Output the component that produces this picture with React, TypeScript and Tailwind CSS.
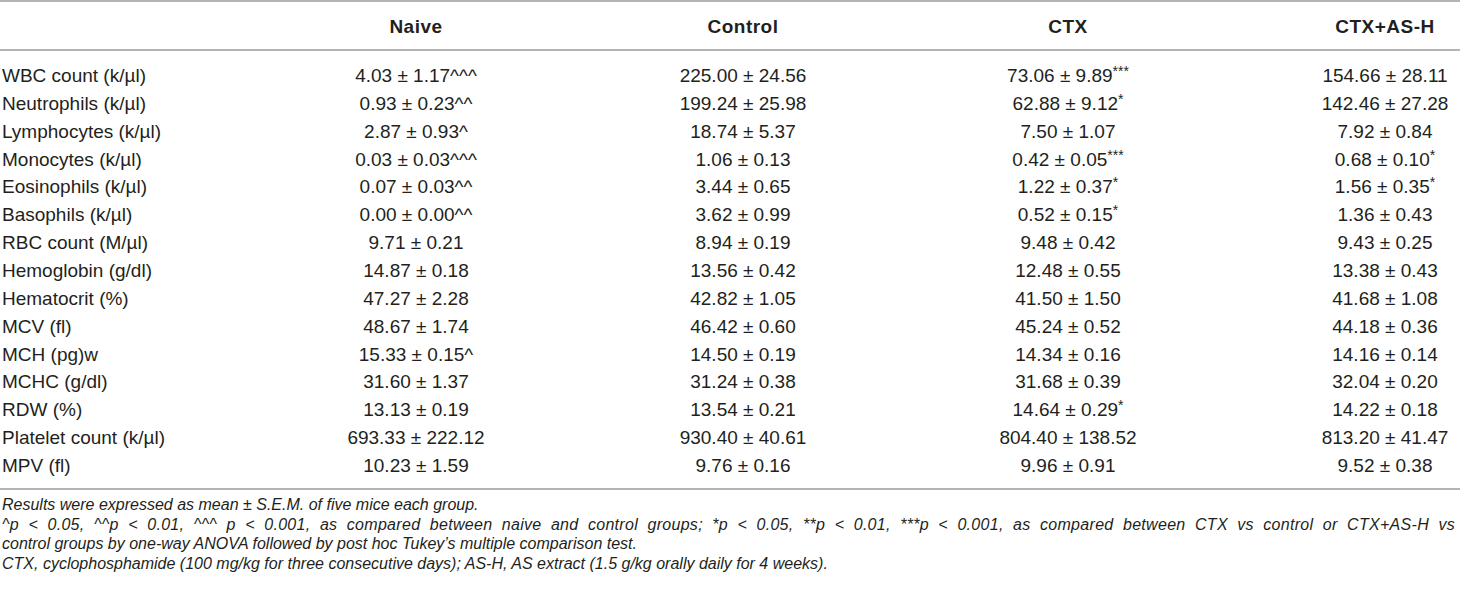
import React from "react";

const rows: [string, string, string, string, string][] = [
  ["WBC count (k/µl)", "4.03 ± 1.17^^^", "225.00 ± 24.56", "73.06 ± 9.89***", "154.66 ± 28.11"],
  ["Neutrophils (k/µl)", "0.93 ± 0.23^^", "199.24 ± 25.98", "62.88 ± 9.12*", "142.46 ± 27.28"],
  ["Lymphocytes (k/µl)", "2.87 ± 0.93^", "18.74 ± 5.37", "7.50 ± 1.07", "7.92 ± 0.84"],
  ["Monocytes (k/µl)", "0.03 ± 0.03^^^", "1.06 ± 0.13", "0.42 ± 0.05***", "0.68 ± 0.10*"],
  ["Eosinophils (k/µl)", "0.07 ± 0.03^^", "3.44 ± 0.65", "1.22 ± 0.37*", "1.56 ± 0.35*"],
  ["Basophils (k/µl)", "0.00 ± 0.00^^", "3.62 ± 0.99", "0.52 ± 0.15*", "1.36 ± 0.43"],
  ["RBC count (M/µl)", "9.71 ± 0.21", "8.94 ± 0.19", "9.48 ± 0.42", "9.43 ± 0.25"],
  ["Hemoglobin (g/dl)", "14.87 ± 0.18", "13.56 ± 0.42", "12.48 ± 0.55", "13.38 ± 0.43"],
  ["Hematocrit (%)", "47.27 ± 2.28", "42.82 ± 1.05", "41.50 ± 1.50", "41.68 ± 1.08"],
  ["MCV (fl)", "48.67 ± 1.74", "46.42 ± 0.60", "45.24 ± 0.52", "44.18 ± 0.36"],
  ["MCH (pg)w", "15.33 ± 0.15^", "14.50 ± 0.19", "14.34 ± 0.16", "14.16 ± 0.14"],
  ["MCHC (g/dl)", "31.60 ± 1.37", "31.24 ± 0.38", "31.68 ± 0.39", "32.04 ± 0.20"],
  ["RDW (%)", "13.13 ± 0.19", "13.54 ± 0.21", "14.64 ± 0.29*", "14.22 ± 0.18"],
  ["Platelet count (k/µl)", "693.33 ± 222.12", "930.40 ± 40.61", "804.40 ± 138.52", "813.20 ± 41.47"],
  ["MPV (fl)", "10.23 ± 1.59", "9.76 ± 0.16", "9.96 ± 0.91", "9.52 ± 0.38"],
];

function Val({ v }: { v: string }) {
  const m = v.match(/^(.*?)(\*+)$/);
  if (m) {
    return (
      <>
        {m[1]}
        <span className="text-[14px] leading-[0] relative top-[-6px]">{m[2]}</span>
      </>
    );
  }
  return <>{v}</>;
}

export default function App() {
  const font = { fontFamily: '"Liberation Sans", Arial, sans-serif' };
  return (
    <div className="w-[1460px] h-[598px] bg-white text-[#231f20] overflow-hidden" style={font}>
      <div className="h-[2px] bg-[#b3b3b3]" />
      <div className="grid grid-cols-[254px_324px_330px_320px_1fr] h-[47px] items-center text-[19px] font-bold tracking-[0.5px] pt-[4px]">
        <div />
        <div className="text-center">Naive</div>
        <div className="text-center">Control</div>
        <div className="text-center">CTX</div>
        <div className="text-center pl-[82px]">CTX+AS-H</div>
      </div>
      <div className="h-[2px] bg-[#b3b3b3]" />
      <div className="pt-[11px] pb-[8px] text-[19px] leading-[27.86px]">
        {rows.map((r, i) => (
          <div key={i} className="grid grid-cols-[254px_324px_330px_320px_1fr] h-[27.86px] whitespace-nowrap">
            <div className="pl-[2px]">{r[0]}</div>
            <div className="text-center">
              <Val v={r[1]} />
            </div>
            <div className="text-center">
              <Val v={r[2]} />
            </div>
            <div className="text-center">
              <Val v={r[3]} />
            </div>
            <div className="text-center pl-[82px]">
              <Val v={r[4]} />
            </div>
          </div>
        ))}
      </div>
      <div className="h-[2px] bg-[#b3b3b3]" />
      <div className="pt-[5px] pl-[2px] pr-[5px] italic text-[16px] leading-[19.7px] whitespace-nowrap">
        <div>Results were expressed as mean ± S.E.M. of five mice each group.</div>
        <div className="text-justify [text-align-last:justify] whitespace-normal tracking-[0.3px]">
          ^p &lt; 0.05, ^^p &lt; 0.01, ^^^ p &lt; 0.001, as compared between naive and control groups; *p &lt; 0.05, **p &lt; 0.01, ***p &lt; 0.001, as compared between CTX vs control or CTX+AS-H vs
        </div>
        <div>control groups by one-way ANOVA followed by post hoc Tukey’s multiple comparison test.</div>
        <div>CTX, cyclophosphamide (100 mg/kg for three consecutive days); AS-H, AS extract (1.5 g/kg orally daily for 4 weeks).</div>
      </div>
    </div>
  );
}
